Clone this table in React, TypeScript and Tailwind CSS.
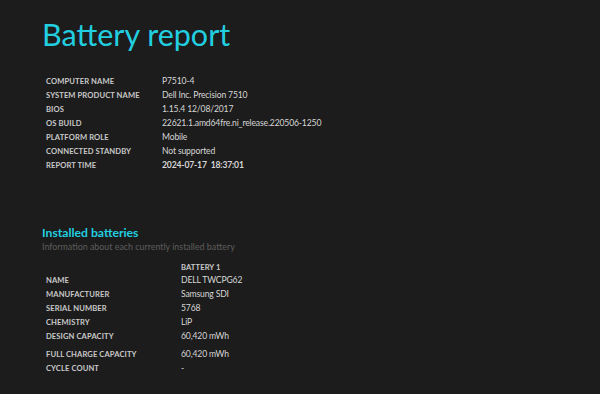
const systemRows: [string, string, boolean?][] = [
  ["COMPUTER NAME", "P7510-4"],
  ["SYSTEM PRODUCT NAME", "Dell Inc. Precision 7510"],
  ["BIOS", "1.15.4 12/08/2017"],
  ["OS BUILD", "22621.1.amd64fre.ni_release.220506-1250"],
  ["PLATFORM ROLE", "Mobile"],
  ["CONNECTED STANDBY", "Not supported"],
  ["REPORT TIME", "2024-07-17  18:37:01", true],
];

const batteryRows: [string, string][] = [
  ["NAME", "DELL TWCPG62"],
  ["MANUFACTURER", "Samsung SDI"],
  ["SERIAL NUMBER", "5768"],
  ["CHEMISTRY", "LiP"],
  ["DESIGN CAPACITY", "60,420 mWh"],
];

const capacityRows: [string, string][] = [
  ["FULL CHARGE CAPACITY", "60,420 mWh"],
  ["CYCLE COUNT", "-"],
];

function Label({ children }: { children: string }) {
  return <div className="text-[7.6px] font-bold leading-[14px] tracking-[0.1px] text-[#c9c9c9]">{children}</div>;
}

function Value({ children, bold }: { children: string; bold?: boolean }) {
  return (
    <div
      className={`whitespace-pre text-[8.6px] leading-[14px] tracking-[-0.15px] text-[#d6d6d6] ${bold ? "font-bold" : ""}`}
    >
      {children}
    </div>
  );
}

export default function App() {
  return (
    <div
      className="h-[394px] w-[600px] overflow-hidden bg-[#1c1c1c] pl-[42px]"
      style={{ fontFamily: "Lato, 'Open Sans', sans-serif" }}
    >
      {/* Title */}
      <h1 className="pt-[12px] text-[30.5px] font-normal leading-[44px] text-[#22cfe0]">Battery report</h1>

      {/* System info */}
      <div className="mt-[18px] grid grid-cols-[116px_1fr] pl-[4px]">
        {systemRows.map(([k, v, b]) => (
          <div key={k} className="contents">
            <Label>{k}</Label>
            <Value bold={b}>{v}</Value>
          </div>
        ))}
      </div>

      {/* Installed batteries */}
      <div className="mt-[53px]">
        <h2 className="text-[12.2px] font-bold leading-[16px] text-[#22cfe0]">Installed batteries</h2>
        <div className="text-[8.9px] leading-[12px] text-[#5c5c5c]">Information about each currently installed battery</div>
      </div>

      <div className="mt-[8px] grid grid-cols-[135px_1fr] pl-[4px]">
        <div />
        <div className="text-[7.6px] font-bold leading-[12px] tracking-[0.1px] text-[#c9c9c9]">BATTERY 1</div>
        {batteryRows.map(([k, v]) => (
          <div key={k} className="contents">
            <Label>{k}</Label>
            <Value>{v}</Value>
          </div>
        ))}
        <div className="col-span-2 h-[4px]" />
        {capacityRows.map(([k, v]) => (
          <div key={k} className="contents">
            <Label>{k}</Label>
            <Value>{v}</Value>
          </div>
        ))}
      </div>
    </div>
  );
}
